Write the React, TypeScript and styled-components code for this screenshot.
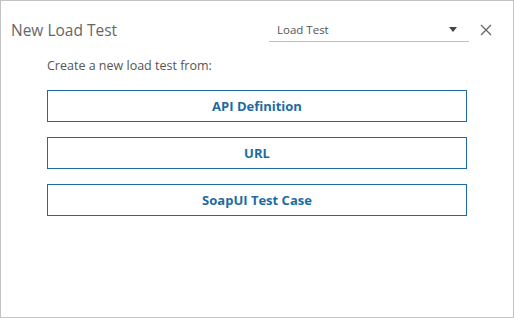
import styled, { createGlobalStyle } from 'styled-components';

const GlobalStyle = createGlobalStyle`
  html, body {
    margin: 0;
    padding: 0;
    background: #fff;
  }
  * {
    box-sizing: border-box;
  }
`;

const Dialog = styled.div`
  width: 514px;
  height: 318px;
  border: 1px solid #c3c3c3;
  background: #fff;
  display: flex;
  flex-direction: column;
  font-family: 'Open Sans', 'Noto Sans', sans-serif;
`;

const Header = styled.div`
  display: flex;
  align-items: center;
  height: 41px;
  padding: 16px 21px 0 10px;
`;

const Title = styled.h1`
  margin: 0;
  font-size: 15.5px;
  font-weight: 400;
  line-height: 20px;
  color: #666;
`;

const Select = styled.div`
  margin-left: auto;
  width: 200px;
  height: 24px;
  display: flex;
  align-items: center;
  padding: 0 12px 0 8px;
  border-bottom: 1px solid #c0c0c0;
  font-size: 11.5px;
  color: #555;
`;

const SelectLabel = styled.span`
  flex: 1;
`;

const Caret = styled.span`
  width: 0;
  height: 0;
  border-left: 4.5px solid transparent;
  border-right: 4.5px solid transparent;
  border-top: 5px solid #444;
`;

const CloseButton = styled.button`
  margin-left: 11px;
  padding: 0;
  border: 0;
  background: none;
  width: 12px;
  height: 12px;
  display: flex;
  cursor: pointer;
`;

const Body = styled.div`
  display: flex;
  flex-direction: column;
  padding: 15px 46px 0;
`;

const Prompt = styled.p`
  margin: 0;
  font-size: 12.5px;
  line-height: 18px;
  color: #555;
`;

const Options = styled.div`
  display: flex;
  flex-direction: column;
  gap: 15px;
  margin-top: 15px;
`;

const OptionButton = styled.button`
  width: 420px;
  height: 32px;
  border: 1px solid #1c6ba3;
  background: #fff;
  color: #1c6ba3;
  font-family: 'Open Sans', 'Noto Sans', sans-serif;
  font-size: 13px;
  font-weight: 700;
  cursor: pointer;
`;

const options = ['API Definition', 'URL', 'SoapUI Test Case'];

export default function App() {
  return (
    <>
      <GlobalStyle />
      <Dialog>
        <Header>
          <Title>New Load Test</Title>
          <Select>
            <SelectLabel>Load Test</SelectLabel>
            <Caret />
          </Select>
          <CloseButton aria-label="Close">
            <svg width="12" height="12" viewBox="0 0 12 12">
              <path d="M1 1 L11 11 M11 1 L1 11" stroke="#666" strokeWidth="1.3" fill="none" />
            </svg>
          </CloseButton>
        </Header>
        <Body>
          <Prompt>Create a new load test from:</Prompt>
          <Options>
            {options.map((o) => (
              <OptionButton key={o}>{o}</OptionButton>
            ))}
          </Options>
        </Body>
      </Dialog>
    </>
  );
}
